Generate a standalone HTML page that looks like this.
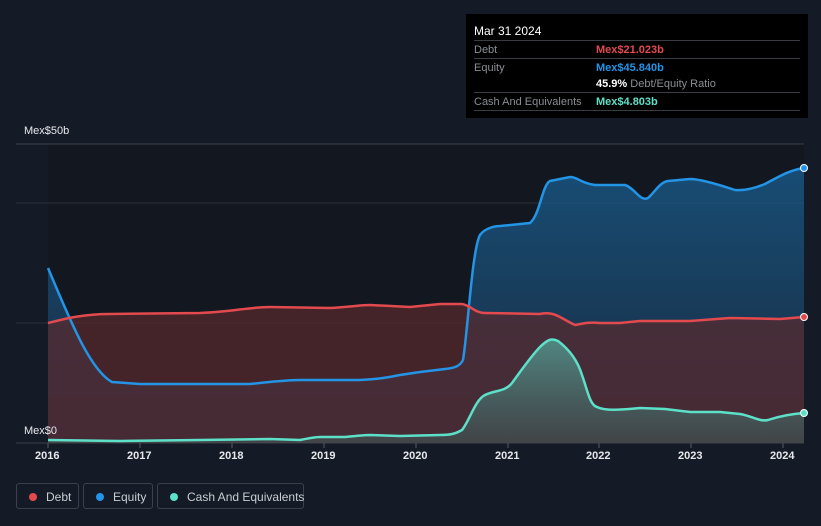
<!DOCTYPE html>
<html><head><style>
html,body{margin:0;width:821px;height:526px;overflow:hidden}
body{background:#151b26;font-family:"Liberation Sans",sans-serif;position:relative}
.tt{position:absolute;left:466px;top:14px;width:342px;height:104px;background:#000;font-size:11px}
.row{position:absolute;left:8px;right:8px;border-top:1px solid #3a3d44;height:18px}
.l{position:absolute;left:0;top:3px;color:#8a8d93}
.v{position:absolute;left:122px;top:3px;font-weight:bold}
.lg{position:absolute;top:483px;height:26px;border:1px solid #3b404b;border-radius:3px;color:#c9ccd2;font-size:12px;line-height:26px;box-sizing:border-box;white-space:nowrap}
.lg i{display:inline-block;width:8px;height:8px;border-radius:50%;margin:0 9px 0 12px;vertical-align:0}
.ax{position:absolute;top:450px;color:#e6e8ec;font-size:11px;font-weight:bold}
</style></head><body>
<svg width="821" height="526" style="position:absolute;left:0;top:0">
<defs>
<linearGradient id="ge" x1="0" y1="0" x2="0" y2="1"><stop offset="0" stop-color="#1a5a8a" stop-opacity=".8"/><stop offset="1" stop-color="#1b3650" stop-opacity=".7"/></linearGradient>
<linearGradient id="gc" x1="0" y1="0" x2="0" y2="1"><stop offset="0" stop-color="#5ad0bd" stop-opacity=".55"/><stop offset="1" stop-color="#3a6b66" stop-opacity=".4"/></linearGradient>
</defs>
<rect x="48" y="144" width="756" height="299" fill="#121720"/>
<line x1="16" y1="144" x2="804" y2="144" stroke="#3a3f4a"/>
<line x1="16" y1="203" x2="804" y2="203" stroke="#2a2f3a"/>
<line x1="16" y1="323" x2="804" y2="323" stroke="#2a2f3a"/>
<line x1="16" y1="443" x2="804" y2="443" stroke="#3a3f4a"/>
<path d="M48,268 C70,320 90,370 112,382 L140,384 L250,384 C270,382 285,380 300,380 L360,380 C380,379 390,377 400,375 L420,372 L445,369 C455,368 460,366 463,360 C468,330 472,250 480,235 C485,228 495,226 500,226 L530,223 C540,215 542,185 550,181 L570,177 C578,177 580,183 595,185 L625,185 C635,188 640,202 648,198 C655,192 660,182 668,181 L690,179 C700,179 720,185 735,190 C745,191 755,188 765,184 C780,176 790,170 804,168 L804,443 L48,443 Z" fill="url(#ge)"/>
<path d="M48,323 C60,320 80,314 110,314 L200,313 C230,312 250,307 270,307 L330,308 C350,307 360,305 370,305 L410,307 L440,304 L462,304 C470,305 475,313 485,313 L540,314 C555,311 560,318 575,325 C585,323 590,322 600,323 L620,323 L640,321 L690,321 L730,318 L780,319 L804,317 L804,443 L48,443 Z" fill="#5a2a2e" fill-opacity=".7"/>
<path d="M48,440 L120,441 L200,440 L270,439 L300,440 C310,438 315,437 320,437 L345,437 C355,436 365,435 370,435 L400,436 L440,435 C450,435 455,434 462,430 C470,420 475,400 485,395 C495,390 505,392 512,383 C520,372 532,355 540,347 C548,339 552,338 558,341 C570,350 578,362 582,375 C588,392 590,405 597,407 C605,411 620,410 640,408 L665,409 L690,412 L720,412 L740,414 C752,416 760,422 768,420 C780,416 790,414 804,413 L804,443 L48,443 Z" fill="url(#gc)"/>
<path d="M48,268 C70,320 90,370 112,382 L140,384 L250,384 C270,382 285,380 300,380 L360,380 C380,379 390,377 400,375 L420,372 L445,369 C455,368 460,366 463,360 C468,330 472,250 480,235 C485,228 495,226 500,226 L530,223 C540,215 542,185 550,181 L570,177 C578,177 580,183 595,185 L625,185 C635,188 640,202 648,198 C655,192 660,182 668,181 L690,179 C700,179 720,185 735,190 C745,191 755,188 765,184 C780,176 790,170 804,168" fill="none" stroke="#2394e6" stroke-width="2.5"/>
<path d="M48,323 C60,320 80,314 110,314 L200,313 C230,312 250,307 270,307 L330,308 C350,307 360,305 370,305 L410,307 L440,304 L462,304 C470,305 475,313 485,313 L540,314 C555,311 560,318 575,325 C585,323 590,322 600,323 L620,323 L640,321 L690,321 L730,318 L780,319 L804,317" fill="none" stroke="#e24a4e" stroke-width="2.5"/>
<path d="M48,440 L120,441 L200,440 L270,439 L300,440 C310,438 315,437 320,437 L345,437 C355,436 365,435 370,435 L400,436 L440,435 C450,435 455,434 462,430 C470,420 475,400 485,395 C495,390 505,392 512,383 C520,372 532,355 540,347 C548,339 552,338 558,341 C570,350 578,362 582,375 C588,392 590,405 597,407 C605,411 620,410 640,408 L665,409 L690,412 L720,412 L740,414 C752,416 760,422 768,420 C780,416 790,414 804,413" fill="none" stroke="#5de0c8" stroke-width="2.5"/>
<circle cx="804" cy="168" r="3.5" fill="#2394e6" stroke="#fff" stroke-width="1"/>
<circle cx="804" cy="317" r="3.5" fill="#e24a4e" stroke="#fff" stroke-width="1"/>
<circle cx="804" cy="413" r="3.5" fill="#5de0c8" stroke="#fff" stroke-width="1"/>
<g stroke="#555a64"><line x1="48" y1="443" x2="48" y2="448"/><line x1="140" y1="443" x2="140" y2="448"/><line x1="232" y1="443" x2="232" y2="448"/><line x1="324" y1="443" x2="324" y2="448"/><line x1="416" y1="443" x2="416" y2="448"/><line x1="508" y1="443" x2="508" y2="448"/><line x1="599" y1="443" x2="599" y2="448"/><line x1="691" y1="443" x2="691" y2="448"/><line x1="783" y1="443" x2="783" y2="448"/></g>
</svg>
<div style="position:absolute;left:24px;top:125px;color:#e6e8ec;font-size:11px">Mex$50b</div>
<div style="position:absolute;left:24px;top:425px;color:#e6e8ec;font-size:11px">Mex$0</div>
<div class="ax" style="left:35px">2016</div><div class="ax" style="left:127px">2017</div><div class="ax" style="left:219px">2018</div><div class="ax" style="left:311px">2019</div><div class="ax" style="left:403px">2020</div><div class="ax" style="left:495px">2021</div><div class="ax" style="left:586px">2022</div><div class="ax" style="left:678px">2023</div><div class="ax" style="left:770px">2024</div>
<div class="tt">
<div style="position:absolute;left:8px;top:10px;color:#fff;font-size:12px">Mar 31 2024</div>
<div class="row" style="top:26px"><span class="l">Debt</span><span class="v" style="color:#e24a4e">Mex$21.023b</span></div>
<div class="row" style="top:44px"><span class="l">Equity</span><span class="v" style="color:#2394e6">Mex$45.840b</span></div>
<div style="position:absolute;left:130px;top:64px;color:#8a8d93"><b style="color:#fff">45.9%</b> Debt/Equity Ratio</div>
<div class="row" style="top:78px"><span class="l">Cash And Equivalents</span><span class="v" style="color:#5de0c8">Mex$4.803b</span></div>
<div class="row" style="top:96px;height:0"></div>
</div>
<div class="lg" style="left:16px;width:63px"><i style="background:#e24a4e"></i>Debt</div>
<div class="lg" style="left:83px;width:70px"><i style="background:#2394e6"></i>Equity</div>
<div class="lg" style="left:157px;width:147px"><i style="background:#5de0c8"></i>Cash And Equivalents</div>
</body></html>
